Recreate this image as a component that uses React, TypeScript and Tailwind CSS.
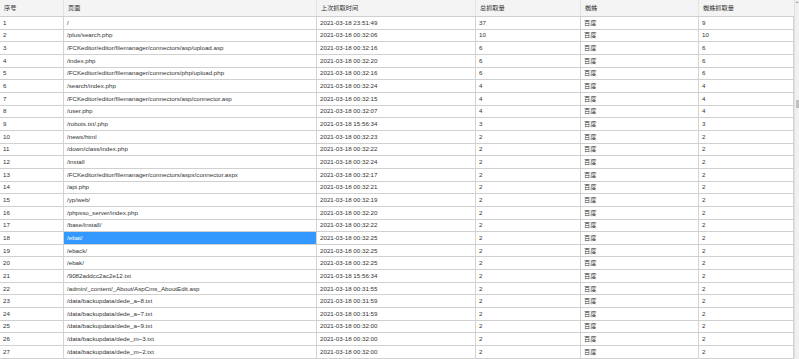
import React from "react";

const rows: [string, string, string, string, string, string][] = [
  ["1", "/", "2021-03-18 23:51:49", "37", "百度", "9"],
  ["2", "/plus/search.php", "2021-03-18 00:32:06", "10", "百度", "10"],
  ["3", "/FCKeditor/editor/filemanager/connectors/asp/upload.asp", "2021-03-18 00:32:16", "6", "百度", "6"],
  ["4", "/index.php", "2021-03-18 00:32:20", "6", "百度", "6"],
  ["5", "/FCKeditor/editor/filemanager/connectors/php/upload.php", "2021-03-18 00:32:16", "6", "百度", "6"],
  ["6", "/search/index.php", "2021-03-18 00:32:24", "4", "百度", "4"],
  ["7", "/FCKeditor/editor/filemanager/connectors/asp/connector.asp", "2021-03-18 00:32:15", "4", "百度", "4"],
  ["8", "/user.php", "2021-03-18 00:32:07", "4", "百度", "4"],
  ["9", "/robots.txt/.php", "2021-03-18 15:56:34", "3", "百度", "3"],
  ["10", "/news/html", "2021-03-18 00:32:23", "2", "百度", "2"],
  ["11", "/down/class/index.php", "2021-03-18 00:32:22", "2", "百度", "2"],
  ["12", "/install", "2021-03-18 00:32:24", "2", "百度", "2"],
  ["13", "/FCKeditor/editor/filemanager/connectors/aspx/connector.aspx", "2021-03-18 00:32:17", "2", "百度", "2"],
  ["14", "/api.php", "2021-03-18 00:32:21", "2", "百度", "2"],
  ["15", "/yp/web/", "2021-03-18 00:32:19", "2", "百度", "2"],
  ["16", "/phpsso_server/index.php", "2021-03-18 00:32:20", "2", "百度", "2"],
  ["17", "/base/install/", "2021-03-18 00:32:22", "2", "百度", "2"],
  ["18", "/ebat/", "2021-03-18 00:32:25", "2", "百度", "2"],
  ["19", "/eback/", "2021-03-18 00:32:25", "2", "百度", "2"],
  ["20", "/ebak/", "2021-03-18 00:32:25", "2", "百度", "2"],
  ["21", "/9082addcc2ac2e12.txt", "2021-03-18 15:56:34", "2", "百度", "2"],
  ["22", "/admin/_content/_About/AspCms_AboutEdit.asp", "2021-03-18 00:31:55", "2", "百度", "2"],
  ["23", "/data/backupdata/dede_a~8.txt", "2021-03-18 00:31:59", "2", "百度", "2"],
  ["24", "/data/backupdata/dede_a~7.txt", "2021-03-18 00:31:59", "2", "百度", "2"],
  ["25", "/data/backupdata/dede_a~9.txt", "2021-03-18 00:32:00", "2", "百度", "2"],
  ["26", "/data/backupdata/dede_m~3.txt", "2021-03-18 00:32:00", "2", "百度", "2"],
  ["27", "/data/backupdata/dede_m~2.txt", "2021-03-18 00:32:00", "2", "百度", "2"],
];

const widths = ["w-[64px]", "w-[253px]", "w-[159px]", "w-[105px]", "w-[118px]", "w-[95px]"];
const headers = ["序号", "页面", "上次抓取时间", "总抓取量", "蜘蛛", "蜘蛛抓取量"];

export default function App() {
  return (
    <div
      className="flex w-[799px] h-[359px] overflow-hidden bg-white text-[#333] text-[6.2px] leading-none"
      style={{ fontFamily: '"Liberation Sans", "Noto Sans CJK SC", sans-serif' }}
    >
      <div className="w-[794px] flex flex-col">
        <div className="flex h-[17px] bg-[#f4f4f4] border-b border-[#d0d0d0] shrink-0">
          {headers.map((h, i) => (
            <div key={i} className={`${widths[i]} shrink-0 flex items-center pl-[4px] ${i < 5 ? "border-r border-[#e4e4e4]" : ""}`}>
              {h}
            </div>
          ))}
        </div>
        {rows.map((r) => (
          <div key={r[0]} className="flex h-[12.66px] shrink-0 border-b border-[#d0d0d0]">
            {r.map((c, i) => {
              const sel = r[0] === "18" && i === 1;
              return (
                <div
                  key={i}
                  className={`${widths[i]} shrink-0 flex items-center pl-[3px] whitespace-nowrap overflow-hidden border-r border-[#d4d4d4] ${sel ? "bg-[#3399ff] text-white" : ""}`}
                >
                  {c}
                </div>
              );
            })}
          </div>
        ))}
      </div>
      <div className="w-[5px] bg-[#f0f0f0] border-l border-[#e0e0e0] flex flex-col items-center">
        <div className="h-[4px] text-[4px] text-[#888]">▴</div>
        <div className="mt-[96px] w-[3px] h-[8px] bg-[#c1c1c1]" />
      </div>
    </div>
  );
}
